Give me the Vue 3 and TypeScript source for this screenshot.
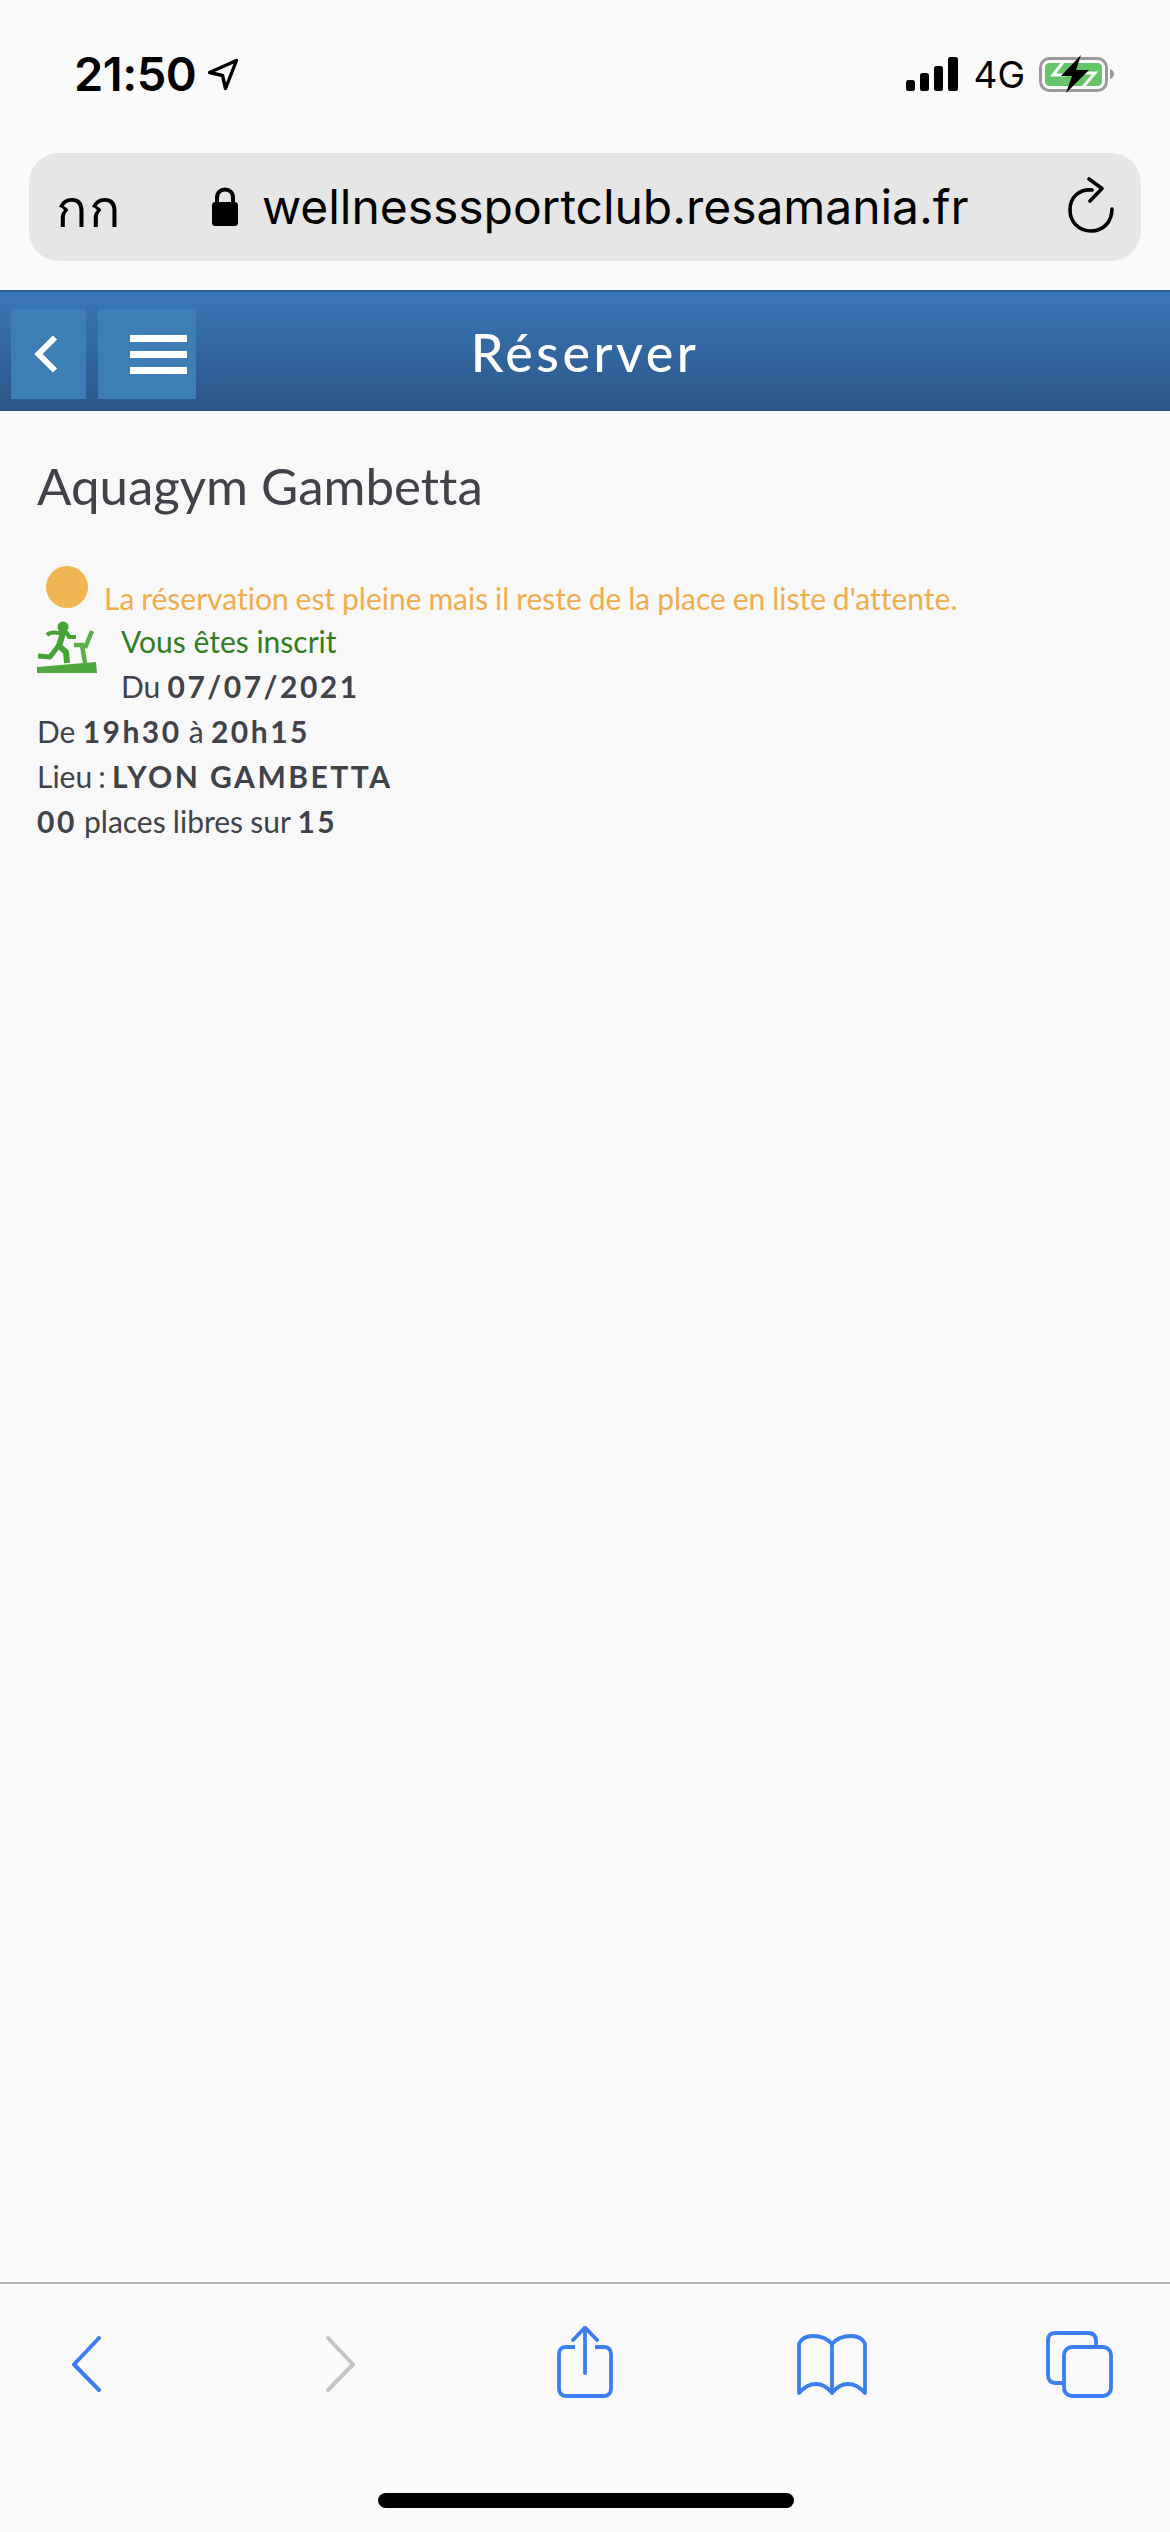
<script setup lang="ts">
const url: string = 'wellnesssportclub.resamania.fr'
</script>

<template>
  <div class="phone">
    <section class="chrome">
      <div class="status">
        <div class="time-group">
          <span class="time">21:50</span>
          <svg class="loc" width="32" height="33" viewBox="0 0 32 33" fill="none">
            <path d="M2.5 14.5 L29.5 2.5 L18.5 30.5 L15.5 17.5 Z" stroke="#000" stroke-width="3.4" stroke-linejoin="round" />
          </svg>
        </div>
        <div class="status-right">
          <svg width="52" height="34" viewBox="0 0 52 34" fill="#000">
            <rect x="0" y="23" width="9" height="11" rx="2.5" />
            <rect x="14" y="16" width="9" height="18" rx="2.5" />
            <rect x="28" y="9" width="9" height="25" rx="2.5" />
            <rect x="42" y="0" width="10" height="34" rx="2.5" />
          </svg>
          <span class="net">4G</span>
          <svg class="batt" width="76" height="38" viewBox="0 0 76 38" fill="none">
            <rect x="1.5" y="3.5" width="66" height="32" rx="9" stroke="#9a9a9a" stroke-width="3" />
            <rect x="6" y="8" width="57" height="23" rx="4.5" fill="#65c466" />
            <path d="M71 14 C74 15 75 17 75 19 C75 21 74 23 71 24 Z" fill="#9a9a9a" />
            <path d="M25 6 L14 20 H27 M44 32 L56 18 H43" stroke="#fafafa" stroke-width="3" />
            <path d="M42 0 L22 21 H33 L27 38 L50 15 H37 Z" fill="#000" />
          </svg>
        </div>
      </div>
      <div class="urlbar">
        <span class="aa">กก</span>
        <svg class="lock" width="28" height="40" viewBox="0 0 28 40" fill="none">
          <path d="M6 17 V11 C6 5.5 9.5 2.5 14 2.5 C18.5 2.5 22 5.500 22 11 V17" stroke="#000" stroke-width="4" />
          <rect x="1" y="15" width="26" height="24" rx="3.5" fill="#000" />
        </svg>
        <span class="url">{{ url }}</span>
        <svg class="reload" width="48" height="56" viewBox="0 0 48 56" fill="none">
          <path d="M25 13 C12 12 3 20 3 33 C3 45 12 54 24 54 C36 54 45 45 45 32" stroke="#000" stroke-width="3.600" stroke-linecap="round" />
          <path d="M22 2 L35 11.500 L23 24" stroke="#000" stroke-width="3.600" stroke-linecap="round" stroke-linejoin="round" />
        </svg>
      </div>
    </section>

    <header class="head">
      <button class="hbtn back" type="button" aria-label="Retour">
        <svg width="24" height="38" viewBox="0 0 24 38" fill="none">
          <path d="M21 2.500 L4.500 19 L21 35.500" stroke="#fff" stroke-width="6" />
        </svg>
      </button>
      <button class="hbtn menu" type="button" aria-label="Menu">
        <span class="bar"></span><span class="bar"></span><span class="bar"></span>
      </button>
      <h1 class="head-title">Réserver</h1>
    </header>

    <main class="content">
      <h2 class="title">Aquagym Gambetta</h2>
      <p class="line warn"><span class="dot"></span>La réservation est pleine mais il reste de la place en liste d'attente.</p>
      <div class="enrolled">
        <svg class="runner" width="60" height="53" viewBox="0 0 60 53" fill="none">
          <path d="M0 46 L59 41 L60 52 H0 Z" fill="#4fa83d" />
          <path d="M48 42 L45 24 M48 27 L55 10" stroke="#5cae4a" stroke-width="4.500" />
          <path d="M37 24 H47" stroke="#5cae4a" stroke-width="4.500" />
          <circle cx="26" cy="6" r="5.500" fill="#44a332" />
          <path d="M10 14 C13 11 17 11 22 12 H30 L32 16 H39" stroke="#44a332" stroke-width="4" stroke-linejoin="round" />
          <path d="M26 12 L22 25 L29 31 L30 42" stroke="#44a332" stroke-width="6" stroke-linejoin="round" />
          <path d="M22 24 L13 36 L1 35" stroke="#44a332" stroke-width="5" stroke-linejoin="round" />
        </svg>
        <div class="enrolled-text">
          <p class="line ok">Vous êtes inscrit</p>
          <p class="line">Du <b>07/07/2021</b></p>
        </div>
      </div>
      <p class="line">De <b>19h30</b> à <b>20h15</b></p>
      <p class="line lieu">Lieu : <b>LYON GAMBETTA</b></p>
      <p class="line"><b>00</b> places libres sur <b>15</b></p>
    </main>

    <footer class="toolbar">
      <div class="tools">
        <svg width="30" height="72" viewBox="0 0 30 72" fill="none">
          <path d="M28 12 L3 38.500 L28 64" stroke="#3b7eee" stroke-width="4" stroke-linecap="round" stroke-linejoin="round" />
        </svg>
        <svg width="30" height="72" viewBox="0 0 30 72" fill="none">
          <path d="M2 12 L27 38.500 L2 64" stroke="#c4c4c4" stroke-width="4" stroke-linecap="round" stroke-linejoin="round" />
        </svg>
        <svg width="56" height="72" viewBox="0 0 56 72" fill="none">
          <path d="M18 21 H9 C4.500 21 2 23.500 2 28 V62 C2 67 4.500 70 9 70 H47 C51.500 70 54 67 54 62 V28 C54 23.500 51.500 21 47 21 H38" stroke="#3b7eee" stroke-width="3.800" />
          <path d="M28 47 V2 M16 14 L28 1.500 L40 14" stroke="#3b7eee" stroke-width="3.800" stroke-linecap="round" stroke-linejoin="round" />
        </svg>
        <svg width="70" height="72" viewBox="0 0 70 72" fill="none">
          <path d="M35 18 C30 12 23 10 16 10 C9 10 4 13 2 18 V67 C8 60 14 58 19 58 C26 58 31 62 35 67 C39 62 44 58 51 58 C56 58 62 60 68 67 V18 C66 13 61 10 54 10 C47 10 40 12 35 18 Z M35 18 V67" stroke="#3b7eee" stroke-width="3.800" stroke-linejoin="round" />
        </svg>
        <svg width="67" height="72" viewBox="0 0 67 72" fill="none">
          <path d="M16 57 H10 C4.500 57 2 54 2 49 V15 C2 9 4.500 7 10 7 H42 C47 7 50 9.500 50 15 V21" stroke="#3b7eee" stroke-width="3.800" />
          <rect x="18" y="21" width="47" height="49" rx="8" stroke="#3b7eee" stroke-width="3.800" />
        </svg>
      </div>
      <div class="home-bar"></div>
    </footer>
  </div>
</template>

<style scoped>
.phone {
  width: 1170px;
  height: 2532px;
  display: flex;
  flex-direction: column;
  background: #f8f8f8;
  overflow: hidden;
  font-family: Lato, "Open Sans", sans-serif;
  font-variant-ligatures: none;
}
.chrome {
  height: 290px;
  flex: none;
  background: #fafafa;
  padding: 56px 29px 0;
  box-sizing: border-box;
}
.status {
  display: flex;
  justify-content: space-between;
  align-items: center;
  height: 36px;
  padding: 0 26px 0 45px;
  font-family: Inter, "Liberation Sans", sans-serif;
  color: #000;
}
.time-group { display: flex; align-items: center; gap: 11px; }
.time { font-size: 47px; font-weight: 600; letter-spacing: -0.5px; line-height: 36px; }
.status-right { display: flex; align-items: center; }
.net { font-size: 37px; font-weight: 400; margin: 2px 14px 0 15px; line-height: 36px; }
.urlbar {
  margin-top: 61px;
  height: 108px;
  width: 1112px;
  background: #e6e6e6;
  border-radius: 30px;
  display: flex;
  align-items: center;
  color: #000;
  font-family: Inter, "Liberation Sans", sans-serif;
}
.aa {
  font-family: "Noto Sans", "DejaVu Sans", "Noto Sans CJK SC", sans-serif;
  font-size: 52px;
  letter-spacing: 2px;
  width: 62px;
  margin-left: 27px;
  line-height: 1;
}
.lock { margin-left: 93px; }
.url { font-size: 48px; letter-spacing: -0.05px; margin-left: 23px; line-height: 60px; white-space: nowrap; }
.reload { margin-left: auto; margin-right: 26px; margin-top: -4px; }

.head {
  height: 121px;
  flex: none;
  box-sizing: border-box;
  border-top: 2px solid #2c5f97;
  background: linear-gradient(#3a77b9, #2b5687);
  padding: 17px 0 0 11px;
  display: flex;
  align-items: flex-start;
}
.hbtn {
  background: #3c7eb5;
  border: 0;
  padding: 0;
  height: 90px;
  display: flex;
  flex-direction: column;
  align-items: center;
  justify-content: center;
}
.back { width: 75px; padding-right: 6px; box-sizing: border-box; }
.menu { width: 98px; margin-left: 12px; gap: 9px; padding-left: 23px; box-sizing: border-box; }
.bar { display: block; width: 57px; height: 7px; background: #fff; }
.head-title {
  flex: 1;
  margin: 0 196px 0 0;
  height: 90px;
  text-align: center;
  color: #fff;
  font-size: 52px;
  font-weight: 500;
  letter-spacing: 3.5px;
  line-height: 86px;
  white-space: nowrap;
}

.content {
  flex: 1;
  padding: 0 37px;
  color: #3f4249;
  font-size: 30px;
}
.title {
  margin: 0;
  padding-top: 44px;
  font-size: 51px;
  font-weight: 400;
  line-height: 62px;
  color: #3f4249;
}
.line {
  margin: 0;
  height: 45px;
  line-height: 45px;
  white-space: nowrap;
  word-spacing: -0.5px;
}
.lieu { word-spacing: -1.5px; }
.line b { font-weight: 700; letter-spacing: 2.5px; word-spacing: 0; }
.warn {
  color: #f0ad4e;
  margin-top: 49px;
  display: flex;
  align-items: flex-end;
  height: 53px;
  line-height: 42px;
  word-spacing: -0.8px;
}
.dot {
  width: 42px;
  height: 42px;
  border-radius: 50%;
  background: #f0b653;
  margin: 0 16px 5px 9px;
  flex: none;
  align-self: flex-start;
}
.ok { color: #2f7d1f; word-spacing: 0; }
.enrolled { display: flex; align-items: flex-start; }
.runner { flex: none; margin-top: 2px; filter: blur(0.6px); }
.enrolled-text { margin-left: 24px; }

.toolbar {
  height: 250px;
  flex: none;
  box-sizing: border-box;
  border-top: 2px solid #b2b2b2;
  background: #fafafa;
  padding-top: 42px;
}
.tools {
  display: grid;
  grid-template-columns: 255px 231px 240px 249px 67px;
  padding-left: 71px;
  height: 72px;
}
.tools svg { display: block; }
.home-bar {
  width: 416px;
  height: 15px;
  border-radius: 8px;
  background: #000;
  margin: 95px 0 0 378px;
}
</style>
